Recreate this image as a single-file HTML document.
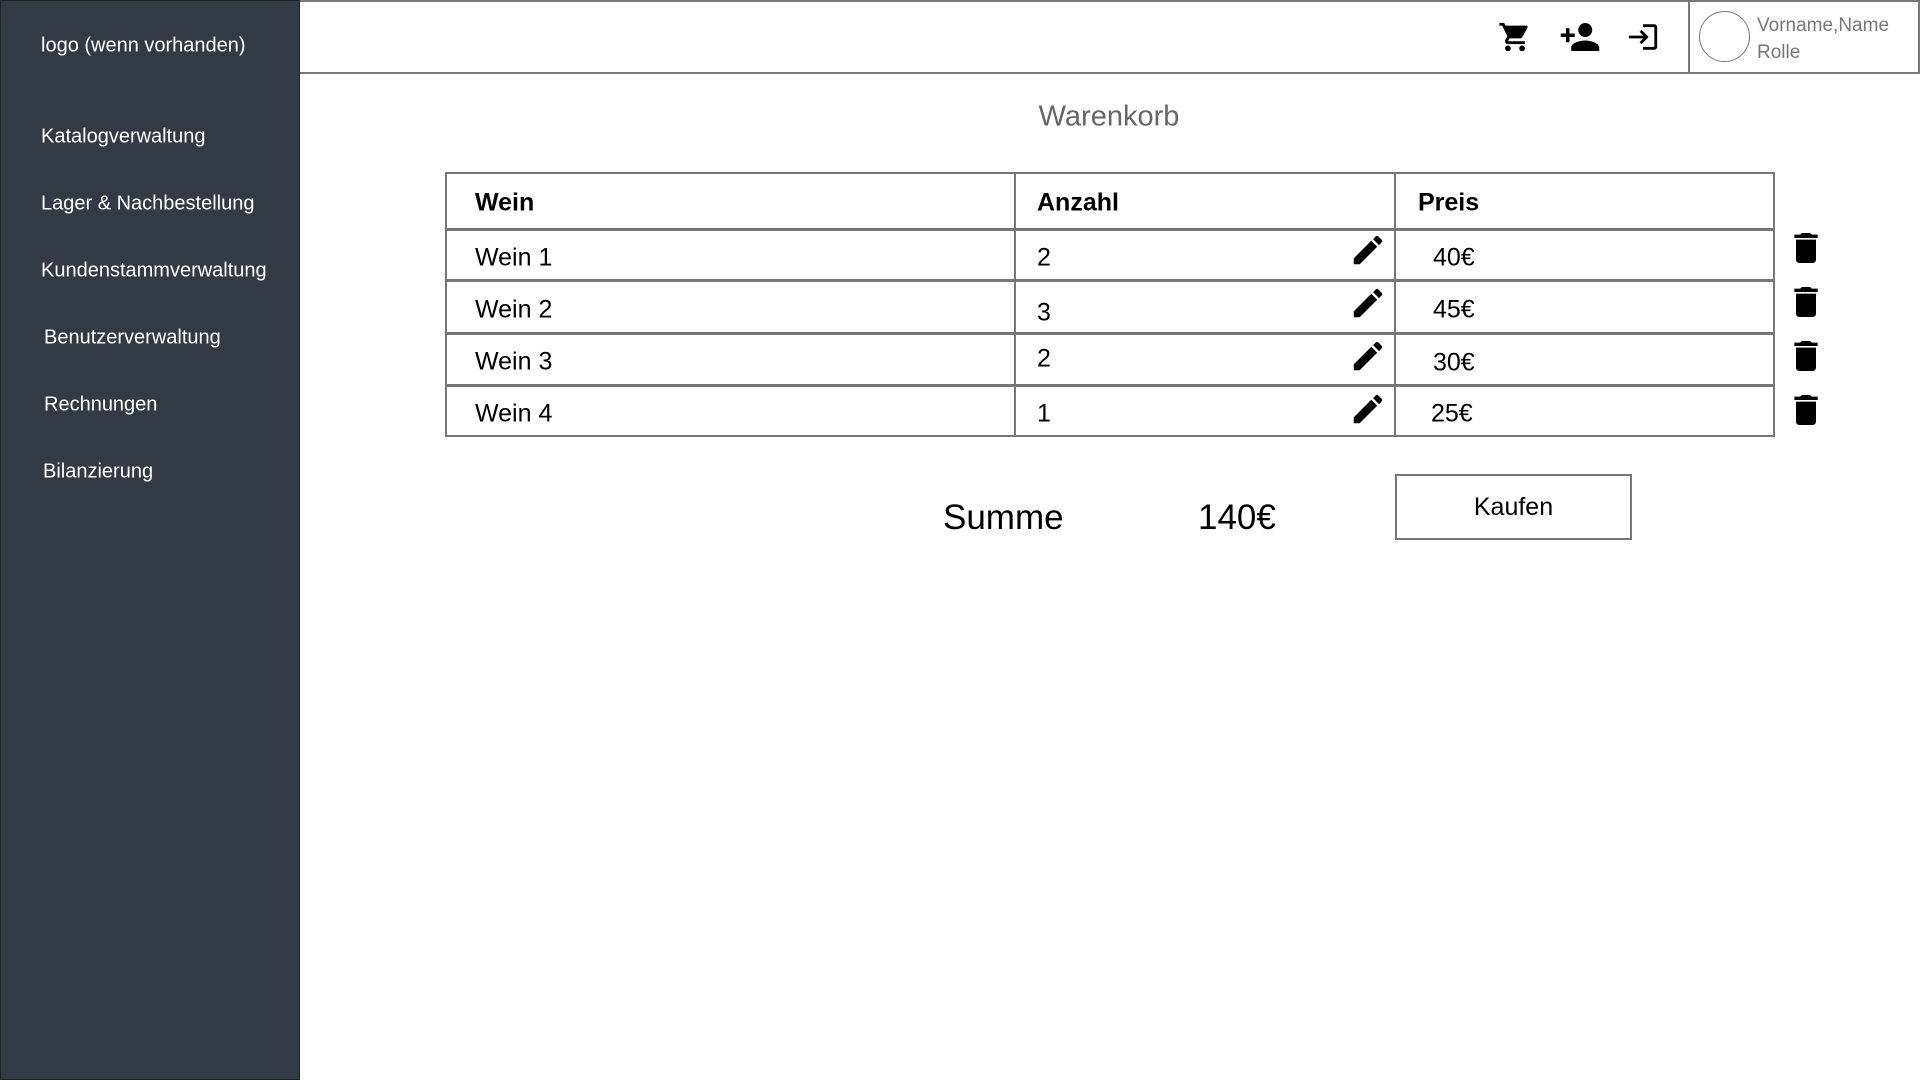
<!DOCTYPE html>
<html><head><meta charset="utf-8"><style>
*{margin:0;padding:0;box-sizing:border-box}
body{width:1920px;height:1080px;overflow:hidden;background:#fff;font-family:"Liberation Sans",sans-serif;position:relative;color:#000}
.side{position:absolute;left:0;top:0;width:300px;height:1080px;background:#323a46;border:1px solid #222}
.side div{position:absolute;color:#fff;font-size:20px;transform:translateY(-50%)}
.hdr{position:absolute;left:300px;top:0;width:1620px;height:74px;border:2px solid #777;border-left:none}
.t{position:absolute;transform:translateY(-50%)}
.hl{position:absolute;background:#777}
</style></head><body>
<div class="side">
<div style="left:40px;top:45px">logo (wenn vorhanden)</div>
<div style="left:40px;top:136px">Katalogverwaltung</div>
<div style="left:40px;top:203px">Lager &amp; Nachbestellung</div>
<div style="left:40px;top:270px">Kundenstammverwaltung</div>
<div style="left:43px;top:337px">Benutzerverwaltung</div>
<div style="left:43px;top:404px">Rechnungen</div>
<div style="left:42px;top:471px">Bilanzierung</div>
</div>
<div class="hdr"></div>
<div class="hl" style="left:1688px;top:0;width:2px;height:74px"></div>
<svg style="position:absolute;left:1498px;top:20px" width="34" height="34" viewBox="0 0 24 24"><path d="M7 18c-1.1 0-2 .9-2 2s.9 2 2 2 2-.9 2-2-.9-2-2-2zM1 2v2h2l3.6 7.6-1.4 2.4c-.1.3-.2.6-.2 1 0 1.1.9 2 2 2h12v-2H7.4c-.1 0-.2-.1-.2-.2v-.1l.9-1.7h7.4c.8 0 1.4-.4 1.7-1l3.6-6.5c.1-.2.1-.3.1-.5 0-.6-.4-1-1-1H5.2l-.9-2H1zm16 16c-1.1 0-2 .9-2 2s.9 2 2 2 2-.9 2-2-.9-2-2-2z"/></svg>
<svg style="position:absolute;left:1558px;top:16px" width="44" height="42" viewBox="0 0 24 24"><path d="M15 12c2.2 0 4-1.8 4-4s-1.8-4-4-4-4 1.8-4 4 1.8 4 4 4zm-9-2V7H4v3H1v2h3v3h2v-3h3v-2H6zm9 4c-2.7 0-8 1.3-8 4v2h16v-2c0-2.7-5.3-4-8-4z"/></svg>
<svg style="position:absolute;left:1626px;top:20px" width="34" height="34" viewBox="0 0 24 24"><path d="M11 7L9.6 8.4l2.6 2.6H2v2h10.2l-2.6 2.6L11 17l5-5-5-5zm9 12h-8v2h8c1.1 0 2-.9 2-2V5c0-1.1-.9-2-2-2h-8v2h8v14z"/></svg>
<div style="position:absolute;left:1699px;top:11px;width:51px;height:51px;border:1.5px solid #777;border-radius:50%"></div>
<div class="t" style="left:1757px;top:26px;font-size:19px;color:#777">Vorname,Name</div>
<div class="t" style="left:1757px;top:53px;font-size:19px;color:#777">Rolle</div>
<div class="t" style="left:1109px;top:117px;font-size:29px;color:#666;transform:translate(-50%,-50%)">Warenkorb</div>
<div style="position:absolute;left:445px;top:172px;width:1330px;height:265px;border:2px solid #777"></div>
<div class="hl" style="left:1014px;top:172px;width:2px;height:265px"></div>
<div class="hl" style="left:1394px;top:172px;width:2px;height:265px"></div>
<div class="hl" style="left:445px;top:228px;width:1330px;height:3px"></div>
<div class="hl" style="left:445px;top:279px;width:1330px;height:3px"></div>
<div class="hl" style="left:445px;top:332px;width:1330px;height:3px"></div>
<div class="hl" style="left:445px;top:384px;width:1330px;height:3px"></div>
<div class="t" style="left:475px;top:203px;font-size:25px;font-weight:bold">Wein</div>
<div class="t" style="left:1037px;top:203px;font-size:25px;font-weight:bold">Anzahl</div>
<div class="t" style="left:1418px;top:203px;font-size:25px;font-weight:bold">Preis</div>
<div class="t" style="left:475px;top:258px;font-size:25px">Wein 1</div>
<div class="t" style="left:475px;top:310px;font-size:25px">Wein 2</div>
<div class="t" style="left:475px;top:362px;font-size:25px">Wein 3</div>
<div class="t" style="left:475px;top:414px;font-size:25px">Wein 4</div>
<div class="t" style="left:1037px;top:258px;font-size:25px">2</div>
<div class="t" style="left:1037px;top:313px;font-size:25px">3</div>
<div class="t" style="left:1037px;top:359px;font-size:25px">2</div>
<div class="t" style="left:1037px;top:414px;font-size:25px">1</div>
<div class="t" style="left:1433px;top:258px;font-size:25px">40€</div>
<div class="t" style="left:1433px;top:310px;font-size:25px">45€</div>
<div class="t" style="left:1433px;top:363px;font-size:25px">30€</div>
<div class="t" style="left:1431px;top:414px;font-size:25px">25€</div>
<svg style="position:absolute;left:1349px;top:231px" width="38" height="38" viewBox="0 0 24 24"><path d="M3 17.25V21h3.75L17.8 9.94l-3.750-3.75L3 17.25zM20.7 7.04c.4-.4.4-1 0-1.4l-2.3-2.3c-.4-.4-1-.4-1.4 0l-1.8 1.8 3.75 3.75 1.8-1.85z"/></svg>
<svg style="position:absolute;left:1349px;top:284px" width="38" height="38" viewBox="0 0 24 24"><path d="M3 17.25V21h3.75L17.8 9.94l-3.75-3.75L3 17.25zM20.7 7.04c.4-.4.4-1 0-1.4l-2.3-2.3c-.4-.4-1-.4-1.4 0l-1.8 1.8 3.75 3.750 1.8-1.85z"/></svg>
<svg style="position:absolute;left:1349px;top:337px" width="38" height="38" viewBox="0 0 24 24"><path d="M3 17.25V21h3.75L17.8 9.94l-3.75-3.75L3 17.25zM20.7 7.04c.4-.4.4-1 0-1.4l-2.3-2.3c-.4-.4-1-.4-1.4 0l-1.8 1.8 3.75 3.75 1.8-1.85z"/></svg>
<svg style="position:absolute;left:1349px;top:390px" width="38" height="38" viewBox="0 0 24 24"><path d="M3 17.25V21h3.75L17.8 9.94l-3.75-3.75L3 17.25zM20.7 7.04c.4-.4.4-1 0-1.4l-2.3-2.3c-.4-.4-1-.4-1.4 0l-1.8 1.8 3.75 3.75 1.8-1.85z"/></svg>
<svg style="position:absolute;left:1786px;top:228px" width="40" height="40" viewBox="0 0 24 24"><path d="M6 19c0 1.1.9 2 2 2h8c1.1 0 2-.9 2-2V7H6v12zM19 4h-3.5l-1-1h-5l-1 1H5v2h14V4z"/></svg>
<svg style="position:absolute;left:1786px;top:282px" width="40" height="40" viewBox="0 0 24 24"><path d="M6 19c0 1.1.9 2 2 2h8c1.1 0 2-.9 2-2V7H6v12zM19 4h-3.5l-1-1h-5l-1 1H5v2h14V4z"/></svg>
<svg style="position:absolute;left:1786px;top:336px" width="40" height="40" viewBox="0 0 24 24"><path d="M6 19c0 1.1.9 2 2 2h8c1.1 0 2-.9 2-2V7H6v12zM19 4h-3.5l-1-1h-5l-1 1H5v2h14V4z"/></svg>
<svg style="position:absolute;left:1786px;top:390px" width="40" height="40" viewBox="0 0 24 24"><path d="M6 19c0 1.1.9 2 2 2h8c1.1 0 2-.9 2-2V7H6v12zM19 4h-3.5l-1-1h-5l-1 1H5v2h14V4z"/></svg>
<div class="t" style="left:943px;top:518px;font-size:35px">Summe</div>
<div class="t" style="left:1198px;top:518px;font-size:35px">140€</div>
<div style="position:absolute;left:1395px;top:474px;width:237px;height:66px;border:2px solid #777;display:flex;align-items:center;justify-content:center;font-size:25px">Kaufen</div>
</body></html>
